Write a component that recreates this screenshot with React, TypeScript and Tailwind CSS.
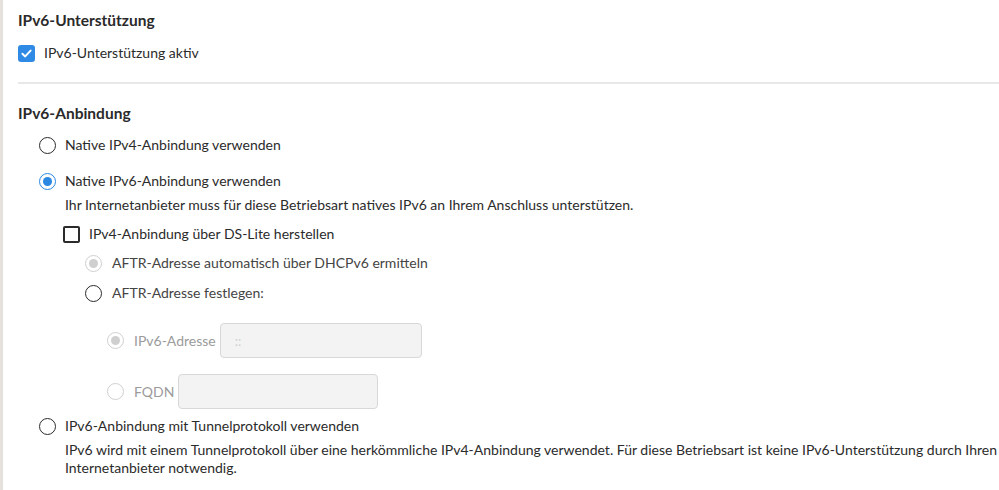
import type { ReactNode } from 'react'

type RadioProps = {
  checked?: boolean
  disabled?: boolean
}

function Radio({ checked = false, disabled = false }: RadioProps) {
  const ring = disabled
    ? 'border-[#d0d0d0]'
    : checked
      ? 'border-[#2a87e2]'
      : 'border-[#2b2b2b]'
  const dot = disabled ? 'bg-[#cfcfcf]' : 'bg-[#2a87e2]'
  return (
    <span
      className={`w-[17px] h-[17px] rounded-full border-[1.5px] ${ring} flex items-center justify-center shrink-0 bg-white`}
    >
      {checked && <span className={`w-[9px] h-[9px] rounded-full ${dot}`} />}
    </span>
  )
}

function Checkbox({ checked = false }: { checked?: boolean }) {
  if (checked) {
    return (
      <span className="w-[17px] h-[17px] rounded-[3px] bg-[#2f8ae5] flex items-center justify-center shrink-0">
        <svg width="13" height="13" viewBox="0 0 12 12" fill="none">
          <path d="M2.2 6.2 L4.8 8.7 L9.8 3.3" stroke="white" strokeWidth="1.8" strokeLinecap="round" strokeLinejoin="round" />
        </svg>
      </span>
    )
  }
  return <span className="w-[17px] h-[17px] rounded-[2px] border-2 border-[#2b2b2b] shrink-0" />
}

function Option({
  control,
  children,
  gap = 'gap-[9px]',
  tone = 'text-[#2b2b2b]',
}: {
  control: ReactNode
  children: ReactNode
  gap?: string
  tone?: string
}) {
  return (
    <label className={`flex items-center h-5 ${gap} ${tone}`}>
      {control}
      <span className="leading-5 whitespace-nowrap">{children}</span>
    </label>
  )
}

export default function App() {
  return (
    <div className="min-h-screen bg-white border-l-[3px] border-[#e5e2dd] pl-[15px] pt-[10px] font-['Lato',sans-serif] text-[14px] text-[#2b2b2b]">
      {/* IPv6 support */}
      <h2 className="h-5 leading-5 text-[15.5px] font-bold text-[#2a2a2a]">IPv6-Unterstützung</h2>
      <div className="mt-[13px]">
        <Option control={<Checkbox checked />}>IPv6-Unterstützung aktiv</Option>
      </div>

      <div className="mt-[19px] h-[2px] bg-[#e8e8e8]" />

      {/* IPv6 connection mode */}
      <h2 className="mt-[19px] h-5 leading-5 text-[15.5px] font-bold text-[#2a2a2a]">IPv6-Anbindung</h2>

      <div className="pl-[21px]">
        <div className="mt-[12px]">
          <Option control={<Radio />}>Native IPv4-Anbindung verwenden</Option>
        </div>

        <div className="mt-[16px]">
          <Option control={<Radio checked />}>Native IPv6-Anbindung verwenden</Option>
        </div>
        <p className="mt-[4px] pl-[26px] leading-5">
          Ihr Internetanbieter muss für diese Betriebsart natives IPv6 an Ihrem Anschluss unterstützen.
        </p>

        <div className="pl-[24px]">
          <div className="mt-[9px]">
            <Option control={<Checkbox />}>IPv4-Anbindung über DS-Lite herstellen</Option>
          </div>

          <div className="pl-[22px]">
            <div className="mt-[9px]">
              <Option control={<Radio checked disabled />} gap="gap-[10px]" tone="text-[#444]">
                AFTR-Adresse automatisch über DHCPv6 ermitteln
              </Option>
            </div>
            <div className="mt-[10px]">
              <Option control={<Radio />} gap="gap-[10px]" tone="text-[#444]">
                AFTR-Adresse festlegen:
              </Option>
            </div>

            <div className="pl-[22px]">
              <div className="mt-[20px] flex items-center h-[35px]">
                <Option control={<Radio checked disabled />} gap="gap-[10px]" tone="text-[#9b9b9b]">
                  IPv6-Adresse
                </Option>
                <input
                  disabled
                  placeholder="::"
                  className="ml-[4px] w-[202px] h-[35px] rounded-[4px] border border-[#d8d8d8] bg-[#f3f3f3] px-[14px] text-[13px] placeholder:text-[#cfcfcf]"
                />
              </div>
              <div className="mt-[16px] flex items-center h-[35px]">
                <Option control={<Radio disabled />} gap="gap-[10px]" tone="text-[#9b9b9b]">
                  FQDN
                </Option>
                <input
                  disabled
                  className="ml-[4px] w-[200px] h-[35px] rounded-[4px] border border-[#d8d8d8] bg-[#f3f3f3] px-[14px] text-[13px]"
                />
              </div>
            </div>
          </div>
        </div>

        <div className="mt-[7px]">
          <Option control={<Radio />}>IPv6-Anbindung mit Tunnelprotokoll verwenden</Option>
        </div>
        <p className="mt-[5px] pl-[26px] leading-[18px]">
          IPv6 wird mit einem Tunnelprotokoll über eine herkömmliche IPv4-Anbindung verwendet. Für diese Betriebsart ist keine IPv6-Unterstützung durch Ihren
          <br />
          Internetanbieter notwendig.
        </p>
      </div>
    </div>
  )
}
